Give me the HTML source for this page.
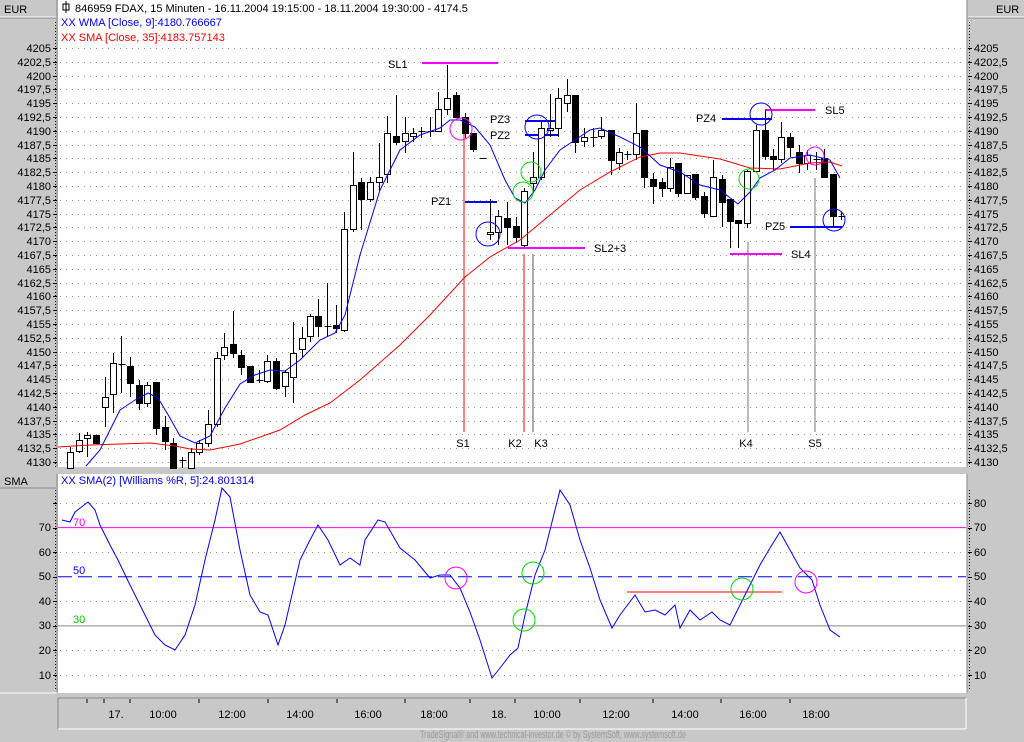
<!DOCTYPE html>
<html><head><meta charset="utf-8"><style>
html,body{margin:0;padding:0;background:#c8c8c8;width:1024px;height:742px;overflow:hidden;font-family:"Liberation Sans",sans-serif}
svg{position:absolute;left:0;top:0}
text{font-family:"Liberation Sans",sans-serif;font-size:11px}
</style></head><body>
<svg id="s" width="1024" height="742" viewBox="0 0 1024 742" xmlns="http://www.w3.org/2000/svg">
<rect x="0" y="0" width="1024" height="742" fill="#c8c8c8"/>
<rect x="58" y="0" width="909" height="467" fill="#fff"/>
<rect x="58" y="474" width="909" height="219" fill="#fff"/>
<line x1="57" y1="0" x2="57" y2="467" stroke="#888"/>
<line x1="57" y1="474" x2="57" y2="693" stroke="#888"/>
<line x1="967" y1="0" x2="967" y2="467" stroke="#888"/>
<line x1="967" y1="474" x2="967" y2="693" stroke="#888"/>
<line x1="0" y1="17" x2="56" y2="17" stroke="#fff"/><line x1="0" y1="18" x2="56" y2="18" stroke="#888"/>
<line x1="968" y1="17" x2="1024" y2="17" stroke="#fff"/><line x1="968" y1="18" x2="1024" y2="18" stroke="#888"/>
<text x="4" y="13" font-size="12">EUR</text>
<text x="996" y="13" font-size="12">EUR</text>
<line x1="0" y1="488" x2="56" y2="488" stroke="#888"/>
<text x="4" y="485" font-size="12">SMA</text>
<line x1="0" y1="693" x2="57" y2="693" stroke="#fff"/>
<rect x="58" y="698" width="908" height="31" fill="#c8c8c8" stroke="#888"/>
<line x1="58" y1="729" x2="966" y2="729" stroke="#fff"/><line x1="966" y1="698" x2="966" y2="729" stroke="#fff"/>
<g id="grid"></g>
<g font-size="11">
<rect x="63" y="4" width="6" height="6" fill="none" stroke="#000"/><line x1="66" y1="1" x2="66" y2="13" stroke="#000"/>
<text x="75" y="12">846959  FDAX, 15 Minuten - 16.11.2004 19:15:00 - 18.11.2004 19:30:00 - 4174.5</text>
<text x="61" y="26" fill="#0000ff">XX WMA [Close, 9]:4180.766667</text>
<text x="61" y="41" fill="#ff0000">XX SMA [Close, 35]:4183.757143</text>
<text x="61" y="484" fill="#0000ff">XX SMA(2) [Williams %R, 5]:24.801314</text>
</g>
<g font-size="11" text-anchor="end">
<text x="51" y="52">4205</text><text x="51" y="66">4202,5</text><text x="51" y="80">4200</text><text x="51" y="93">4197,5</text><text x="51" y="107">4195</text><text x="51" y="121">4192,5</text><text x="51" y="135">4190</text><text x="51" y="149">4187,5</text><text x="51" y="162">4185</text><text x="51" y="176">4182,5</text><text x="51" y="190">4180</text><text x="51" y="204">4177,5</text><text x="51" y="218">4175</text><text x="51" y="231">4172,5</text><text x="51" y="245">4170</text><text x="51" y="259">4167,5</text><text x="51" y="273">4165</text><text x="51" y="287">4162,5</text><text x="51" y="300">4160</text><text x="51" y="314">4157,5</text><text x="51" y="328">4155</text><text x="51" y="342">4152,5</text><text x="51" y="356">4150</text><text x="51" y="369">4147,5</text><text x="51" y="383">4145</text><text x="51" y="397">4142,5</text><text x="51" y="411">4140</text><text x="51" y="425">4137,5</text><text x="51" y="438">4135</text><text x="51" y="452">4132,5</text><text x="51" y="466">4130</text>
</g>
<g font-size="11">
<text x="974" y="52">4205</text><text x="974" y="66">4202,5</text><text x="974" y="80">4200</text><text x="974" y="93">4197,5</text><text x="974" y="107">4195</text><text x="974" y="121">4192,5</text><text x="974" y="135">4190</text><text x="974" y="149">4187,5</text><text x="974" y="162">4185</text><text x="974" y="176">4182,5</text><text x="974" y="190">4180</text><text x="974" y="204">4177,5</text><text x="974" y="218">4175</text><text x="974" y="231">4172,5</text><text x="974" y="245">4170</text><text x="974" y="259">4167,5</text><text x="974" y="273">4165</text><text x="974" y="287">4162,5</text><text x="974" y="300">4160</text><text x="974" y="314">4157,5</text><text x="974" y="328">4155</text><text x="974" y="342">4152,5</text><text x="974" y="356">4150</text><text x="974" y="369">4147,5</text><text x="974" y="383">4145</text><text x="974" y="397">4142,5</text><text x="974" y="411">4140</text><text x="974" y="425">4137,5</text><text x="974" y="438">4135</text><text x="974" y="452">4132,5</text><text x="974" y="466">4130</text>
</g>
<g font-size="11">
<text x="51" y="531" text-anchor="end">70</text><text x="51" y="556" text-anchor="end">60</text><text x="51" y="580" text-anchor="end">50</text><text x="51" y="605" text-anchor="end">40</text><text x="51" y="629" text-anchor="end">30</text><text x="51" y="654" text-anchor="end">20</text><text x="51" y="679" text-anchor="end">10</text>
<text x="974" y="507">80</text><text x="974" y="531">70</text><text x="974" y="556">60</text><text x="974" y="580">50</text><text x="974" y="605">40</text><text x="974" y="629">30</text><text x="974" y="654">20</text><text x="974" y="679">10</text>
</g>
<g font-size="11" text-anchor="middle">
<text x="116" y="718">17.</text><text x="163" y="718">10:00</text><text x="232" y="718">12:00</text><text x="300" y="718">14:00</text><text x="368" y="718">16:00</text><text x="434" y="718">18:00</text><text x="499" y="718">18.</text><text x="547" y="718">10:00</text><text x="616" y="718">12:00</text><text x="685" y="718">14:00</text><text x="753" y="718">16:00</text><text x="816" y="718">18:00</text>
</g>
<g stroke="#000"><line x1="87" y1="699" x2="87" y2="703"/><line x1="104" y1="699" x2="104" y2="703"/><line x1="130" y1="699" x2="130" y2="703"/><line x1="199" y1="699" x2="199" y2="703"/><line x1="268" y1="699" x2="268" y2="703"/><line x1="337" y1="699" x2="337" y2="703"/><line x1="405" y1="699" x2="405" y2="703"/><line x1="470" y1="699" x2="470" y2="703"/><line x1="515" y1="699" x2="515" y2="703"/><line x1="580" y1="699" x2="580" y2="703"/><line x1="653" y1="699" x2="653" y2="703"/><line x1="721" y1="699" x2="721" y2="703"/><line x1="790" y1="699" x2="790" y2="703"/></g>
<text x="420" y="738" font-size="8" fill="#999" textLength="266" lengthAdjust="spacingAndGlyphs">TradeSignal® and www.technical-investor.de © by SystemSoft, www.systemsoft.de</text>

<line x1="58" y1="527.6" x2="966" y2="527.6" stroke="#ff00ff"/>
<line x1="58" y1="576.7" x2="966" y2="576.7" stroke="#0000ff" stroke-dasharray="14,6"/>
<line x1="58" y1="625.9" x2="966" y2="625.9" stroke="#888"/>
<text x="73" y="526" fill="#ff00ff" font-size="11">70</text>
<text x="73" y="574" fill="#0000ff" font-size="11">50</text>
<text x="73" y="623" fill="#00cc00" font-size="11">30</text>
<line x1="627" y1="592" x2="782" y2="592" stroke="#ff0000"/>
<polyline fill="none" stroke="#0000ff" points="62,520 70,522 75,512 88,502 95,510 100,525 110,545 118,560 130,585 140,605 155,635 165,645 175,650 185,635 195,605 205,560 215,520 222,488 230,497 240,550 250,595 260,612 268,615 278,645 285,625 300,560 310,540 318,525 328,540 340,565 350,558 360,565 365,540 378,520 385,522 400,548 415,560 430,578 440,575 450,575 460,588 470,612 480,640 492,678 500,668 510,655 518,648 525,615 535,575 545,550 560,490 570,505 580,540 590,568 600,600 612,628 620,615 635,595 645,612 655,610 665,615 675,605 680,628 690,610 700,620 712,612 720,620 730,625 740,605 750,585 760,565 770,548 780,532 790,550 800,568 812,580 820,605 830,630 840,637"/>
<g fill="none">
<circle cx="456" cy="578" r="11" stroke="#ff00ff"/><circle cx="533" cy="573" r="11" stroke="#00dd00"/><circle cx="524" cy="620" r="11" stroke="#00dd00"/><circle cx="742" cy="589" r="11" stroke="#00dd00"/><circle cx="806" cy="582" r="11" stroke="#ff00ff"/>
</g>

<g stroke="#ff0000"><line x1="464" y1="130" x2="464" y2="432"/><line x1="524" y1="254" x2="524" y2="432"/><line x1="533" y1="254" x2="533" y2="432" stroke="#555"/><line x1="748" y1="242" x2="748" y2="432" stroke="#777"/><line x1="815" y1="178" x2="815" y2="432" stroke="#777"/></g>
<g font-size="11">
<text x="463" y="447" text-anchor="middle">S1</text><text x="515" y="447" text-anchor="middle">K2</text><text x="541" y="447" text-anchor="middle">K3</text><text x="746" y="447" text-anchor="middle">K4</text><text x="815" y="447" text-anchor="middle">S5</text>
<text x="388" y="68">SL1</text><text x="431" y="205">PZ1</text><text x="490" y="123">PZ3</text><text x="490" y="139">PZ2</text><text x="594" y="252">SL2+3</text><text x="696" y="122">PZ4</text><text x="825" y="114">SL5</text><text x="765" y="230">PZ5</text><text x="791" y="258">SL4</text>
</g>
<g stroke-width="2">
<line x1="422" y1="63" x2="498" y2="63" stroke="#ff00ff"/><line x1="465" y1="202" x2="497" y2="202" stroke="#0000ff"/>
<line x1="525" y1="121" x2="558" y2="121" stroke="#0000ff"/><line x1="525" y1="135" x2="558" y2="135" stroke="#0000ff"/>
<line x1="508" y1="248" x2="585" y2="248" stroke="#ff00ff"/><line x1="722" y1="119" x2="772" y2="119" stroke="#0000ff"/>
<line x1="765" y1="110" x2="815" y2="110" stroke="#ff00ff"/><line x1="790" y1="227" x2="842" y2="227" stroke="#0000ff"/>
<line x1="730" y1="254" x2="782" y2="254" stroke="#ff00ff"/>
</g>
<g id="candles"></g>
<polyline fill="none" stroke="#ff0000" points="58,447 90,445 120,444 150,443 175,446 190,449 210,450 240,444 280,430 305,415 330,403 360,380 400,345 430,315 465,277 490,257 520,240 550,215 580,190 610,172 640,157 660,153 680,153 720,159 750,168 780,169 810,163 830,162 842,166"/>
<polyline fill="none" stroke="#0000ff" points="86,466 100,450 120,410 135,400 148,393 158,398 170,418 180,436 195,443 210,436 225,408 240,384 255,375 270,370 285,371 300,360 320,340 335,333 345,315 360,255 380,190 400,150 420,135 440,128 450,120 460,120 475,127 490,145 505,180 515,198 525,203 535,190 545,170 560,150 575,140 590,130 600,128 620,137 640,147 660,165 680,172 700,185 720,190 738,204 750,192 760,178 775,170 790,158 810,155 830,160 840,178"/>
<g fill="none">
<circle cx="461" cy="129" r="11" stroke="#ff00ff"/><circle cx="488" cy="234" r="12" stroke="#0000ff"/><circle cx="537" cy="127" r="12" stroke="#0000ff"/><circle cx="523" cy="192" r="10" stroke="#00dd00"/><circle cx="531" cy="172" r="10" stroke="#00dd00"/><circle cx="761" cy="114" r="11" stroke="#0000ff"/><circle cx="749" cy="179" r="10" stroke="#00dd00"/><circle cx="815" cy="156" r="9" stroke="#ff00ff"/><circle cx="834" cy="220" r="11" stroke="#0000ff"/>
</g>
</svg>
<script>
var NS="http://www.w3.org/2000/svg";
function el(p,t,a){var e=document.createElementNS(NS,t);for(var k in a)e.setAttribute(k,a[k]);p.appendChild(e);return e;}
var g=document.getElementById("grid");
for(var i=0;i<31;i++){var y=Math.round(48+i*13.8)+0.5;el(g,"line",{x1:60,y1:y,x2:966,y2:y,stroke:"#999","stroke-dasharray":"1,5"});
el(g,"line",{x1:53,y1:y,x2:57,y2:y,stroke:"#000"});el(g,"line",{x1:968,y1:y,x2:972,y2:y,stroke:"#000"});}
for(var v=10;v<=80;v+=10){var y=Math.round(675-(v-10)*2.457)+0.5;if(v!=70&&v!=50&&v!=30)el(g,"line",{x1:60,y1:y,x2:966,y2:y,stroke:"#999","stroke-dasharray":"1,5"});
el(g,"line",{x1:53,y1:y,x2:57,y2:y,stroke:"#000"});el(g,"line",{x1:968,y1:y,x2:972,y2:y,stroke:"#000"});}
el(g,"line",{x1:969.5,y1:22,x2:969.5,y2:467,stroke:"#000","stroke-dasharray":"1,2"});
el(g,"line",{x1:55.5,y1:22,x2:55.5,y2:467,stroke:"#000","stroke-dasharray":"1,2"});
el(g,"line",{x1:969.5,y1:490,x2:969.5,y2:690,stroke:"#000","stroke-dasharray":"1,2"});
el(g,"line",{x1:55.5,y1:490,x2:55.5,y2:690,stroke:"#000","stroke-dasharray":"1,2"});
var C=[[70,452,468,447,468,'w'],[79,440,451,433,453,'w'],[87,435,438,432,457,'w'],[96,435,443,435,443,'b'],[105,397,407,377,427,'w'],[113,363,394,353,413,'w'],[121,364,364,336,393,'c'],[130,366,383,357,397,'b'],[139,385,403,380,410,'b'],[147,385,403,382,407,'w'],[156,382,428,382,435,'b'],[165,427,441,416,450,'b'],[173,443,468,438,468,'b'],[182,460,460,457,468,'c'],[191,452,468,448,468,'w'],[199,443,452,440,455,'w'],[208,424,443,410,447,'w'],[217,358,424,352,427,'w'],[224,347,355,333,360,'w'],[233,344,353,311,358,'b'],[241,355,367,350,375,'b'],[250,366,382,366,382,'b'],[259,380,380,370,383,'c'],[267,361,381,355,383,'w'],[276,361,388,358,390,'b'],[285,372,386,370,397,'w'],[293,353,377,322,403,'w'],[302,338,349,327,358,'w'],[310,316,336,314,342,'w'],[318,316,326,299,337,'b'],[327,326,326,283,337,'c'],[336,325,328,305,333,'b'],[344,229,330,212,332,'w'],[353,185,229,152,232,'w'],[361,182,199,178,230,'b'],[370,182,199,177,202,'w'],[379,177,182,143,191,'w'],[387,133,174,116,183,'w'],[396,136,142,95,145,'b'],[405,133,141,117,153,'w'],[413,133,136,128,142,'w'],[421,131,131,127,138,'c'],[430,131,131,117,137,'c'],[438,109,131,92,132,'w'],[447,98,109,65,115,'w'],[456,95,117,92,117,'b'],[465,117,133,113,138,'b'],[473,133,149,133,152,'b'],[482,158,158,158,158,'c'],[490,232,234,199,240,'w'],[498,216,232,210,245,'w'],[507,218,227,202,245,'b'],[516,226,237,217,243,'b'],[524,191,245,188,247,'w'],[533,177,183,152,193,'w'],[541,128,177,122,180,'w'],[550,128,130,94,137,'w'],[558,98,128,88,137,'w'],[567,95,103,79,112,'w'],[575,95,142,95,153,'b'],[584,137,141,128,147,'w'],[593,137,137,128,147,'c'],[601,130,136,117,139,'w'],[611,130,160,130,175,'b'],[619,152,163,148,170,'w'],[627,154,154,151,160,'c'],[636,133,154,103,160,'w'],[644,130,177,130,188,'b'],[653,179,186,173,204,'b'],[662,182,188,178,197,'b'],[670,167,188,158,192,'w'],[678,163,193,163,197,'b'],[687,175,193,175,193,'w'],[695,174,197,174,200,'b'],[704,196,213,192,218,'b'],[713,177,216,160,217,'w'],[722,179,202,175,227,'b'],[730,199,221,199,248,'b'],[738,220,223,220,248,'b'],[747,171,223,170,228,'w'],[756,130,171,125,172,'w'],[765,130,156,110,160,'b'],[773,156,159,149,170,'b'],[781,137,159,122,163,'w'],[790,137,147,133,157,'b'],[799,152,163,145,173,'b'],[807,155,163,150,170,'w'],[816,159,159,152,170,'c'],[824,158,177,149,178,'b'],[833,174,216,174,227,'b'],[841,216,216,212,220,'c']];
var cg=document.getElementById("candles");
C.forEach(function(c){var x=c[0]+0.5;
el(cg,"line",{x1:x,y1:c[3],x2:x,y2:c[4],stroke:"#000"});
if(c[5]=='c'){el(cg,"line",{x1:x-3,y1:c[1]+0.5,x2:x+4,y2:c[1]+0.5,stroke:"#000"});}
else{var h=Math.max(c[2]-c[1],2);el(cg,"rect",{x:x-3,y:c[1]+0.5,width:6,height:h,fill:c[5]=='w'?"#fff":"#000",stroke:"#000"});}
});
</script>
</body></html>
